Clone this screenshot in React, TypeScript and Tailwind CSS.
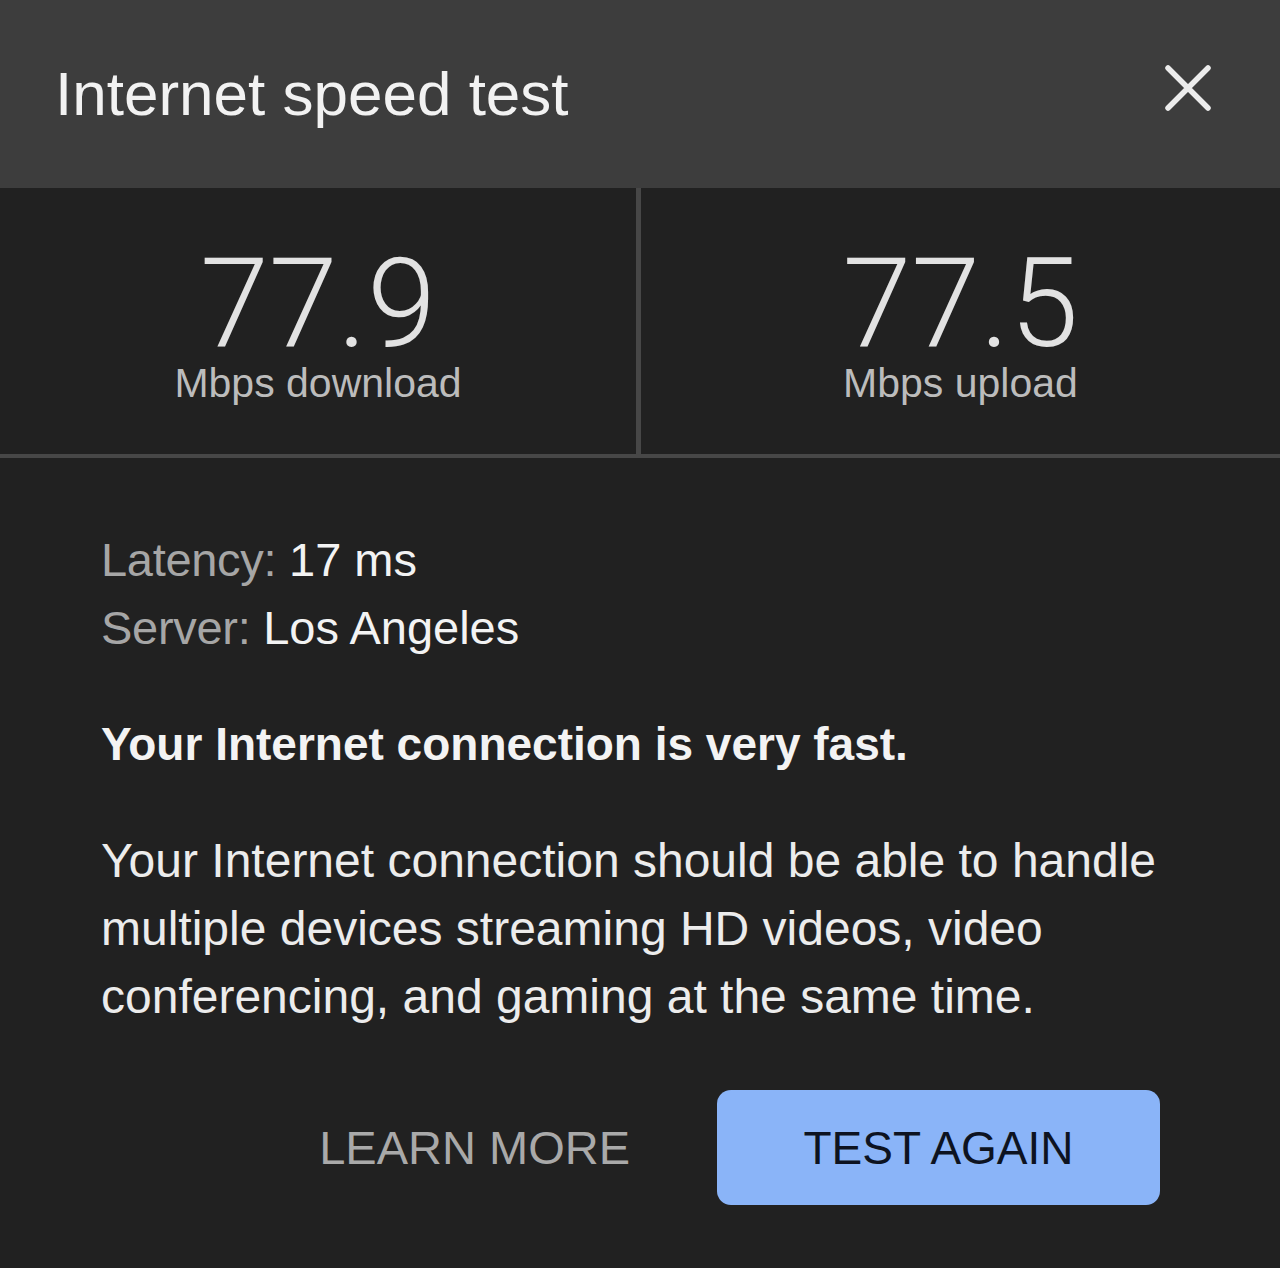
const SANS = "font-['Liberation_Sans',Arial,sans-serif]";

interface Stat { value: string; label: string; }

const STATS: Stat[] = [
  { value: "77.9", label: "Mbps download" },
  { value: "77.5", label: "Mbps upload" },
];

const StatCell = ({ stat, divider }: { stat: Stat; divider?: boolean }) => (
  <div className={`flex flex-col items-center pt-[66px] ${divider ? "w-[641px] border-r-[5px] border-[#474747]" : "flex-1"}`}>
    <div className="font-['Roboto',sans-serif] font-light text-[124px] leading-[100px] text-[#e2e2e2]">{stat.value}</div>
    <div className={`${SANS} text-[41px] leading-none mt-[9px] text-[#bcbcbc]`}>{stat.label}</div>
  </div>
);

// close glyph, drawn to match the heavier cross in the header
const CloseIcon = () => (
  <svg width="48" height="48" viewBox="0 0 48 48" className="mb-[12px]">
    <path d="M4 4 L44 44 M44 4 L4 44" stroke="#ececec" strokeWidth="5.5" strokeLinecap="round" fill="none" />
  </svg>
);

export default function App() {
  return (
    <div className={`${SANS} w-[1280px] h-[1268px] bg-[#212121] overflow-hidden`}>
      <header className="h-[188px] bg-[#3d3d3d] flex items-center justify-between pl-[55px] pr-[68px]">
        <h1 className="text-[62px] text-[#f2f2f2] leading-none">Internet speed test</h1>
        <CloseIcon />
      </header>

      <section className="flex h-[270px] border-b-[4px] border-[#474747]">
        <StatCell stat={STATS[0]} divider />
        <StatCell stat={STATS[1]} />
      </section>

      <main className="pl-[101px] pr-[100px] pt-[68px]">
        <div className="text-[47px] leading-[68px]">
          <div>
            <span className="text-[#a6a6a6] tracking-[-0.3px]">Latency: </span>
            <span className="text-[#f3f3f3]">17 ms</span>
          </div>
          <div>
            <span className="text-[#a6a6a6] tracking-[-0.3px]">Server: </span>
            <span className="text-[#f3f3f3]">Los Angeles</span>
          </div>
        </div>

        <p className="mt-[48px] text-[46px] leading-[68px] font-bold text-[#f3f3f3]">
          Your Internet connection is very fast.
        </p>

        <p className="mt-[49px] text-[48px] leading-[68px] text-[#ececec]">
          Your Internet connection should be able to handle multiple devices streaming HD videos, video conferencing, and gaming at the same time.
        </p>

        <div className="mt-[59px] flex items-center justify-end gap-[87px] pr-[20px]">
          <button className="text-[47px] leading-none text-[#a9a9a9]">LEARN MORE</button>
          <button className="w-[443px] h-[115px] rounded-[14px] bg-[#8ab4f8] text-[46px] leading-none text-[#0d1321]">
            TEST AGAIN
          </button>
        </div>
      </main>
    </div>
  );
}
